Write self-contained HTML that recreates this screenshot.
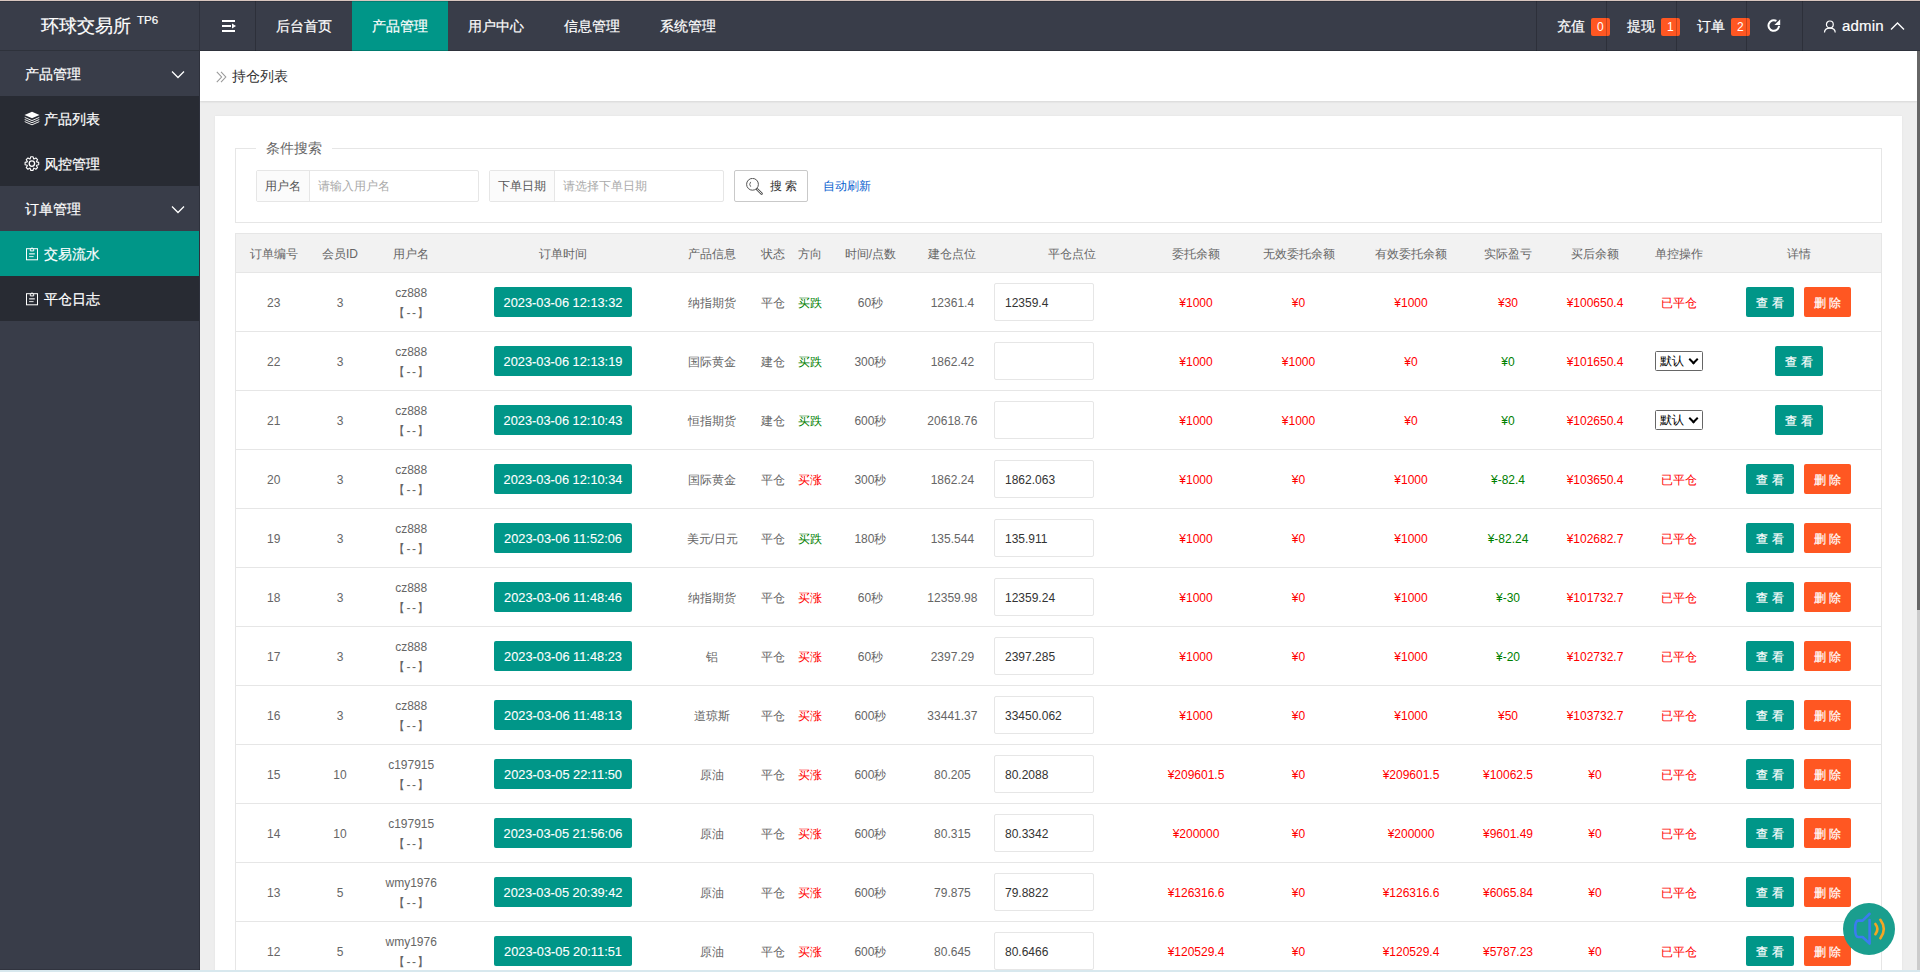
<!DOCTYPE html>
<html><head><meta charset="utf-8"><title>持仓列表</title>
<style>
*{box-sizing:border-box;margin:0;padding:0}
html,body{width:1920px;height:972px;overflow:hidden;background:#eee;font-family:"Liberation Sans",sans-serif;font-size:14px;color:#333}
.abs{position:absolute}
#topline{position:absolute;left:0;top:0;width:1920px;height:1px;background:#d8c6bf}
#hdr{position:absolute;left:0;top:1px;width:1920px;height:50px;background:#393D49;color:#fff}
#hdr .shade{position:absolute;left:0;bottom:0;width:100%;height:1px;background:rgba(0,0,0,.18)}
#hdr .shadet{position:absolute;left:0;top:0;width:100%;height:1px;background:rgba(0,0,0,.15)}
#logo{position:absolute;left:0;top:0;width:199px;height:49px;color:#fff}
#logo .t{position:absolute;left:41px;top:13px;font-size:18px;line-height:24px;white-space:nowrap}
#logo sup{position:absolute;left:96px;top:-1px;font-size:11.6px;line-height:14px}
.vline{position:absolute;top:0;width:1px;height:50px;background:rgba(0,0,0,.2)}
.nav{position:absolute;top:0;height:50px;line-height:50px;font-size:14px;color:#fff;text-align:center;white-space:nowrap}
.nav.act{background:#009688}
.nav,.si .tx,#logo .t{-webkit-text-stroke:0.2px #fff}
.badge{position:absolute;top:17px;height:18px;line-height:18px;padding:0 6px;background:#FF5722;color:#fff;font-size:12px;border-radius:2px}
#side{position:absolute;left:0;top:51px;width:199px;height:921px;background:#393D49}
#sideline{position:absolute;left:199px;top:1px;width:1px;height:969px;background:#2e313c}
.si{position:absolute;left:0;width:199px;height:45px;line-height:45px;color:#fff;font-size:14px;white-space:nowrap}
.si.child{background:#282B33}
.si.on{background:#009688}
.si .tx{position:absolute;left:25px;top:1px}
.si.child .tx{left:44px}
.si svg{position:absolute}
#main{position:absolute;left:200px;top:51px;width:1717px;height:921px;background:#eee;overflow:hidden}
#crumb{position:absolute;left:0;top:0;width:1717px;height:50px;background:#fff;box-shadow:0 1px 2px rgba(0,0,0,.1)}
#crumb .tx{position:absolute;left:32px;top:16px;font-size:14px;line-height:18px;color:#333}
#card{position:absolute;left:15px;top:65px;width:1687px;height:900px;background:#fff;box-shadow:0 0 2px rgba(0,0,0,.06)}
#scroll{position:absolute;left:1917px;top:51px;width:3px;height:559px;background:#666}
#track{position:absolute;left:1917px;top:610px;width:3px;height:360px;background:#cbcbcb}
#botline{position:absolute;left:0;top:970px;width:1920px;height:2px;background:#d8e8ee}
#botshade{position:absolute;left:0;top:969px;width:200px;height:1px;background:rgba(0,0,0,.15)}
fieldset{position:absolute;left:20px;top:32px;width:1647px;height:75px;border:1px solid #e6e6e6}
.legend{position:absolute;left:41px;top:24px;padding:0 10px;background:#fff;font-size:14px;line-height:16px;color:#666}
.ig{position:absolute;top:54px;height:32px;border:1px solid #e6e6e6;border-radius:2px;background:#fff}
.ig .lb{position:absolute;left:0;top:0;height:30px;line-height:30px;background:#FBFBFB;border-right:1px solid #e6e6e6;font-size:12px;color:#555;text-align:center}
.ig .ph{position:absolute;top:0;line-height:30px;font-size:12px;color:#aaa;white-space:nowrap}
.sbtn{position:absolute;left:519px;top:54px;width:74px;height:32px;border:1px solid #C9C9C9;border-radius:2px;background:#fff}
.sbtn .tx{position:absolute;left:35px;top:0;line-height:30px;font-size:12px;color:#333;white-space:nowrap}
.auto{position:absolute;left:608px;top:54px;line-height:32px;font-size:12px;color:#0a62d0;white-space:nowrap}
#tbl{position:absolute;left:20px;top:117px;width:1647px;border:1px solid #e6e6e6;border-bottom:none}
.th{position:relative;height:39px;background:#f2f2f2;border-bottom:1px solid #e6e6e6;color:#666;font-size:12px}
.th .c{top:14px;line-height:12px}
.tr{position:relative;height:59px;border-bottom:1px solid #e6e6e6;color:#666;font-size:12px;background:#fff}
.c{position:absolute;top:21px;line-height:18px;white-space:nowrap;transform:translateX(-50%)}
.c.u{top:10px;line-height:20px;text-align:center}
.dd{letter-spacing:1.5px;padding-left:1.5px}
.r{color:#f00}.g{color:#008000}
.tb{position:absolute;top:14px;width:138px;text-align:center;height:30px;line-height:30px;padding:1px 0 0;background:#009688;color:#fff;font-size:12.8px;border-radius:2px;white-space:nowrap;transform:translateX(-50%)}
.inp{position:absolute;left:758px;top:10px;width:100px;height:38px;border:1px solid #e6e6e6;border-radius:2px;line-height:36px;padding:1px 0 0 10px;font-size:12px;color:#333}
.sel{position:absolute;top:19px;width:48px;height:20px;border:1px solid #666;border-radius:1.5px;line-height:18px;font-size:12px;color:#000;padding-left:4px;transform:translateX(-50%)}
.sel i{position:absolute;left:32px;top:5px;width:11px;height:8px;background:none}
.sel i:before{content:"";position:absolute;left:2px;top:-1px;width:5px;height:5px;border-right:2.2px solid #000;border-bottom:2.2px solid #000;transform:rotate(45deg)}
.btns{position:absolute;top:14px;height:30px;white-space:nowrap}
.btns b{display:inline-block;vertical-align:top;width:48px;height:30px;line-height:30px;padding-top:1px;text-align:center;font-weight:500;color:#fff;font-size:12px;border-radius:2px}
.btns b+b{margin-left:10px}
.btns b{-webkit-text-stroke:0.2px #fff}.tb{-webkit-text-stroke:0.1px #fff}
.bv{background:#009688}.bd{background:#FF5722;width:47px!important}
#voice{position:absolute;left:1843px;top:903px;width:52px;height:52px;border-radius:50%;background:#1a9e8e}
</style></head>
<body>
<div id="topline"></div>
<div id="hdr">
  <div id="logo"><div class="t">环球交易所<sup>TP6</sup></div></div>
  <div class="vline" style="left:199px"></div>
  <svg class="abs" style="left:222px;top:19px" width="15" height="13" viewBox="0 0 15 13"><rect x="0" y="0" width="13" height="2" fill="#fff"/><rect x="0" y="5" width="9" height="2" fill="#fff"/><path d="M10 3.5 L14 6 L10 8.5Z" fill="#fff"/><rect x="0" y="10" width="13" height="2" fill="#fff"/></svg>
  <div class="vline" style="left:255px"></div>
  <div class="nav" style="left:256px;width:96px">后台首页</div>
  <div class="nav act" style="left:352px;width:96px">产品管理</div>
  <div class="nav" style="left:448px;width:96px">用户中心</div>
  <div class="nav" style="left:544px;width:96px">信息管理</div>
  <div class="nav" style="left:640px;width:96px">系统管理</div>

  <div class="vline" style="left:1536px"></div>
  <div class="nav" style="left:1557px">充值</div><span class="badge" style="left:1591px">0</span>
  <div class="vline" style="left:1606px"></div>
  <div class="nav" style="left:1627px">提现</div><span class="badge" style="left:1661px">1</span>
  <div class="vline" style="left:1676px"></div>
  <div class="nav" style="left:1697px">订单</div><span class="badge" style="left:1731px">2</span>
  <div class="vline" style="left:1746px"></div>
  <svg class="abs" style="left:1766px;top:17px" width="16" height="16" viewBox="0 0 16 16"><path d="M13.08 7.96 A5.3 5.3 0 1 1 10.45 2.91" fill="none" stroke="#fff" stroke-width="2"/><path d="M14.2 1.2 L14.2 7 L8.4 7Z" fill="#fff"/></svg>
  <div class="vline" style="left:1802px"></div>
  <svg class="abs" style="left:1823px;top:18px" width="14" height="15" viewBox="0 0 14 15"><circle cx="6.85" cy="5.4" r="3.4" fill="none" stroke="#fff" stroke-width="1.2"/><path d="M1.5 13.6 C1.5 10.6 3.7 9.1 6.85 9.1 C10 9.1 12.2 10.6 12.2 13.6" fill="none" stroke="#fff" stroke-width="1.2"/></svg>
  <div class="nav" style="left:1842px;font-size:15px;letter-spacing:0.2px">admin</div>
  <svg class="abs" style="left:1890px;top:20px" width="15" height="10" viewBox="0 0 15 10"><path d="M1 8.5 L7.5 2 L14 8.5" fill="none" stroke="#fff" stroke-width="1.4"/></svg>
  <div class="shade"></div><div class="shadet"></div>
</div>

<div id="side">
  <div class="si" style="top:0"><span class="tx">产品管理</span>
    <svg style="left:171px;top:19px" width="14" height="9" viewBox="0 0 14 9"><path d="M1 1.5 L7 7.5 L13 1.5" fill="none" stroke="#fff" stroke-width="1.3"/></svg></div>
  <div class="si child" style="top:45px">
    <svg style="left:24px;top:15px" width="16" height="15" viewBox="0 0 16 15"><path d="M8 0.8 L15.5 4 L8 7.2 L0.5 4Z" fill="#fff"/><path d="M0.7 6.4 L8 9.6 L15.3 6.4 M0.7 8.5 L8 11.7 L15.3 8.5 M0.7 10.6 L8 13.8 L15.3 10.6" fill="none" stroke="#fff" stroke-width="0.9"/></svg>
    <span class="tx">产品列表</span></div>
  <div class="si child" style="top:90px">
    <svg style="left:24px;top:15px" width="16" height="16" viewBox="0 0 16 16"><path d="M6.19 2.90 L6.70 0.80 L9.10 0.80 L9.61 2.90 L10.01 3.07 L11.86 1.95 L13.55 3.64 L12.43 5.49 L12.60 5.89 L14.70 6.40 L14.70 8.80 L12.60 9.31 L12.43 9.71 L13.55 11.56 L11.86 13.25 L10.01 12.13 L9.61 12.30 L9.10 14.40 L6.70 14.40 L6.19 12.30 L5.79 12.13 L3.94 13.25 L2.25 11.56 L3.37 9.71 L3.20 9.31 L1.10 8.80 L1.10 6.40 L3.20 5.89 L3.37 5.49 L2.25 3.64 L3.94 1.95 L5.79 3.07Z" fill="none" stroke="#fff" stroke-width="1.1" stroke-linejoin="round"/><circle cx="7.9" cy="7.6" r="2.7" fill="none" stroke="#fff" stroke-width="1.3"/></svg>
    <span class="tx">风控管理</span></div>
  <div class="si" style="top:135px"><span class="tx">订单管理</span>
    <svg style="left:171px;top:19px" width="14" height="9" viewBox="0 0 14 9"><path d="M1 1.5 L7 7.5 L13 1.5" fill="none" stroke="#fff" stroke-width="1.3"/></svg></div>
  <div class="si child on" style="top:180px">
    <svg style="left:26px;top:16px" width="12" height="14" viewBox="0 0 12 14"><rect x="0.5" y="1.7" width="11" height="11.1" fill="none" stroke="#fff" stroke-width="1"/><path d="M4.3 3.9 V2.2 Q6 -0.6 7.7 2.2 V3.9 Z" fill="none" stroke="#fff" stroke-width="1"/><rect x="3.1" y="6.2" width="5.7" height="1.3" fill="#fff" opacity=".85"/><rect x="3.1" y="9.1" width="4.5" height="1" fill="#fff" opacity=".85"/></svg>
    <span class="tx">交易流水</span></div>
  <div class="si child" style="top:225px">
    <svg style="left:26px;top:16px" width="12" height="14" viewBox="0 0 12 14"><rect x="0.5" y="1.7" width="11" height="11.1" fill="none" stroke="#fff" stroke-width="1"/><path d="M4.3 3.9 V2.2 Q6 -0.6 7.7 2.2 V3.9 Z" fill="none" stroke="#fff" stroke-width="1"/><rect x="3.1" y="6.2" width="5.7" height="1.3" fill="#fff" opacity=".85"/><rect x="3.1" y="9.1" width="4.5" height="1" fill="#fff" opacity=".85"/></svg>
    <span class="tx">平仓日志</span></div>
</div>
<div id="sideline"></div>

<div id="main">
  <div id="crumb">
    <svg class="abs" style="left:16px;top:20px" width="11" height="12" viewBox="0 0 11 12"><path d="M0.8 0.8 L5.6 6 L0.8 11.2 M5 0.8 L9.8 6 L5 11.2" fill="none" stroke="#999" stroke-width="1.1"/></svg>
    <span class="tx">持仓列表</span>
  </div>
  <div id="card">
    <fieldset></fieldset>
    <span class="legend">条件搜索</span>
    <div class="ig" style="left:41px;width:223px"><span class="lb" style="width:53px">用户名</span><span class="ph" style="left:61px">请输入用户名</span></div>
    <div class="ig" style="left:274px;width:235px"><span class="lb" style="width:65px">下单日期</span><span class="ph" style="left:73px">请选择下单日期</span></div>
    <div class="sbtn">
      <svg class="abs" style="left:10px;top:7px" width="19" height="18" viewBox="0 0 19 18"><circle cx="7.5" cy="6.3" r="5.9" fill="none" stroke="#555" stroke-width="1"/><path d="M12.2 11.4 L16.6 15.6" stroke="#555" stroke-width="2.6" stroke-linecap="round"/><path d="M12.4 11.6 L16.4 15.4" stroke="#fff" stroke-width="0.9" stroke-linecap="round"/><path d="M5.7 3.9 Q3.6 6.3 5.7 8.7" fill="none" stroke="#555" stroke-width="0.9"/></svg>
      <span class="tx">搜 索</span></div>
    <span class="auto">自动刷新</span>
    <div id="tbl">
      <div class="th"><span class="c" style="left:37.7px">订单编号</span><span class="c" style="left:104.0px">会员ID</span><span class="c" style="left:175.2px">用户名</span><span class="c" style="left:327.0px">订单时间</span><span class="c" style="left:476.2px">产品信息</span><span class="c" style="left:536.5px">状态</span><span class="c" style="left:574.0px">方向</span><span class="c" style="left:634.4px">时间/点数</span><span class="c" style="left:716.4px">建仓点位</span><span class="c" style="left:835.9px">平仓点位</span><span class="c" style="left:960.0px">委托余额</span><span class="c" style="left:1062.5px">无效委托余额</span><span class="c" style="left:1175.0px">有效委托余额</span><span class="c" style="left:1272.0px">实际盈亏</span><span class="c" style="left:1359.0px">买后余额</span><span class="c" style="left:1443.0px">单控操作</span><span class="c" style="left:1563.0px">详情</span></div>
<div class="tr"><span class="c" style="left:37.7px">23</span><span class="c" style="left:104.0px">3</span><span class="c u" style="left:175.2px">cz888<br>【<span class="dd">--</span>】</span><span class="tb" style="left:327.0px">2023-03-06 12:13:32</span><span class="c" style="left:476.2px">纳指期货</span><span class="c" style="left:536.5px">平仓</span><span class="c g" style="left:574.0px">买跌</span><span class="c" style="left:634.4px">60秒</span><span class="c" style="left:716.4px">12361.4</span><span class="inp">12359.4</span><span class="c r" style="left:960.0px">¥1000</span><span class="c r" style="left:1062.5px">¥0</span><span class="c r" style="left:1175.0px">¥1000</span><span class="c r" style="left:1272.0px">¥30</span><span class="c r" style="left:1359.0px">¥100650.4</span><span class="c r" style="left:1443.0px">已平仓</span><span class="btns" style="left:1510px"><b class="bv">查 看</b><b class="bd">删 除</b></span></div>
<div class="tr"><span class="c" style="left:37.7px">22</span><span class="c" style="left:104.0px">3</span><span class="c u" style="left:175.2px">cz888<br>【<span class="dd">--</span>】</span><span class="tb" style="left:327.0px">2023-03-06 12:13:19</span><span class="c" style="left:476.2px">国际黄金</span><span class="c" style="left:536.5px">建仓</span><span class="c g" style="left:574.0px">买跌</span><span class="c" style="left:634.4px">300秒</span><span class="c" style="left:716.4px">1862.42</span><span class="inp"></span><span class="c r" style="left:960.0px">¥1000</span><span class="c r" style="left:1062.5px">¥1000</span><span class="c r" style="left:1175.0px">¥0</span><span class="c g" style="left:1272.0px">¥0</span><span class="c r" style="left:1359.0px">¥101650.4</span><span class="sel" style="left:1443.0px">默认<i></i></span><span class="btns" style="left:1539px"><b class="bv">查 看</b></span></div>
<div class="tr"><span class="c" style="left:37.7px">21</span><span class="c" style="left:104.0px">3</span><span class="c u" style="left:175.2px">cz888<br>【<span class="dd">--</span>】</span><span class="tb" style="left:327.0px">2023-03-06 12:10:43</span><span class="c" style="left:476.2px">恒指期货</span><span class="c" style="left:536.5px">建仓</span><span class="c g" style="left:574.0px">买跌</span><span class="c" style="left:634.4px">600秒</span><span class="c" style="left:716.4px">20618.76</span><span class="inp"></span><span class="c r" style="left:960.0px">¥1000</span><span class="c r" style="left:1062.5px">¥1000</span><span class="c r" style="left:1175.0px">¥0</span><span class="c g" style="left:1272.0px">¥0</span><span class="c r" style="left:1359.0px">¥102650.4</span><span class="sel" style="left:1443.0px">默认<i></i></span><span class="btns" style="left:1539px"><b class="bv">查 看</b></span></div>
<div class="tr"><span class="c" style="left:37.7px">20</span><span class="c" style="left:104.0px">3</span><span class="c u" style="left:175.2px">cz888<br>【<span class="dd">--</span>】</span><span class="tb" style="left:327.0px">2023-03-06 12:10:34</span><span class="c" style="left:476.2px">国际黄金</span><span class="c" style="left:536.5px">平仓</span><span class="c r" style="left:574.0px">买涨</span><span class="c" style="left:634.4px">300秒</span><span class="c" style="left:716.4px">1862.24</span><span class="inp">1862.063</span><span class="c r" style="left:960.0px">¥1000</span><span class="c r" style="left:1062.5px">¥0</span><span class="c r" style="left:1175.0px">¥1000</span><span class="c g" style="left:1272.0px">¥-82.4</span><span class="c r" style="left:1359.0px">¥103650.4</span><span class="c r" style="left:1443.0px">已平仓</span><span class="btns" style="left:1510px"><b class="bv">查 看</b><b class="bd">删 除</b></span></div>
<div class="tr"><span class="c" style="left:37.7px">19</span><span class="c" style="left:104.0px">3</span><span class="c u" style="left:175.2px">cz888<br>【<span class="dd">--</span>】</span><span class="tb" style="left:327.0px">2023-03-06 11:52:06</span><span class="c" style="left:476.2px">美元/日元</span><span class="c" style="left:536.5px">平仓</span><span class="c g" style="left:574.0px">买跌</span><span class="c" style="left:634.4px">180秒</span><span class="c" style="left:716.4px">135.544</span><span class="inp">135.911</span><span class="c r" style="left:960.0px">¥1000</span><span class="c r" style="left:1062.5px">¥0</span><span class="c r" style="left:1175.0px">¥1000</span><span class="c g" style="left:1272.0px">¥-82.24</span><span class="c r" style="left:1359.0px">¥102682.7</span><span class="c r" style="left:1443.0px">已平仓</span><span class="btns" style="left:1510px"><b class="bv">查 看</b><b class="bd">删 除</b></span></div>
<div class="tr"><span class="c" style="left:37.7px">18</span><span class="c" style="left:104.0px">3</span><span class="c u" style="left:175.2px">cz888<br>【<span class="dd">--</span>】</span><span class="tb" style="left:327.0px">2023-03-06 11:48:46</span><span class="c" style="left:476.2px">纳指期货</span><span class="c" style="left:536.5px">平仓</span><span class="c r" style="left:574.0px">买涨</span><span class="c" style="left:634.4px">60秒</span><span class="c" style="left:716.4px">12359.98</span><span class="inp">12359.24</span><span class="c r" style="left:960.0px">¥1000</span><span class="c r" style="left:1062.5px">¥0</span><span class="c r" style="left:1175.0px">¥1000</span><span class="c g" style="left:1272.0px">¥-30</span><span class="c r" style="left:1359.0px">¥101732.7</span><span class="c r" style="left:1443.0px">已平仓</span><span class="btns" style="left:1510px"><b class="bv">查 看</b><b class="bd">删 除</b></span></div>
<div class="tr"><span class="c" style="left:37.7px">17</span><span class="c" style="left:104.0px">3</span><span class="c u" style="left:175.2px">cz888<br>【<span class="dd">--</span>】</span><span class="tb" style="left:327.0px">2023-03-06 11:48:23</span><span class="c" style="left:476.2px">铝</span><span class="c" style="left:536.5px">平仓</span><span class="c r" style="left:574.0px">买涨</span><span class="c" style="left:634.4px">60秒</span><span class="c" style="left:716.4px">2397.29</span><span class="inp">2397.285</span><span class="c r" style="left:960.0px">¥1000</span><span class="c r" style="left:1062.5px">¥0</span><span class="c r" style="left:1175.0px">¥1000</span><span class="c g" style="left:1272.0px">¥-20</span><span class="c r" style="left:1359.0px">¥102732.7</span><span class="c r" style="left:1443.0px">已平仓</span><span class="btns" style="left:1510px"><b class="bv">查 看</b><b class="bd">删 除</b></span></div>
<div class="tr"><span class="c" style="left:37.7px">16</span><span class="c" style="left:104.0px">3</span><span class="c u" style="left:175.2px">cz888<br>【<span class="dd">--</span>】</span><span class="tb" style="left:327.0px">2023-03-06 11:48:13</span><span class="c" style="left:476.2px">道琼斯</span><span class="c" style="left:536.5px">平仓</span><span class="c r" style="left:574.0px">买涨</span><span class="c" style="left:634.4px">600秒</span><span class="c" style="left:716.4px">33441.37</span><span class="inp">33450.062</span><span class="c r" style="left:960.0px">¥1000</span><span class="c r" style="left:1062.5px">¥0</span><span class="c r" style="left:1175.0px">¥1000</span><span class="c r" style="left:1272.0px">¥50</span><span class="c r" style="left:1359.0px">¥103732.7</span><span class="c r" style="left:1443.0px">已平仓</span><span class="btns" style="left:1510px"><b class="bv">查 看</b><b class="bd">删 除</b></span></div>
<div class="tr"><span class="c" style="left:37.7px">15</span><span class="c" style="left:104.0px">10</span><span class="c u" style="left:175.2px">c197915<br>【<span class="dd">--</span>】</span><span class="tb" style="left:327.0px">2023-03-05 22:11:50</span><span class="c" style="left:476.2px">原油</span><span class="c" style="left:536.5px">平仓</span><span class="c r" style="left:574.0px">买涨</span><span class="c" style="left:634.4px">600秒</span><span class="c" style="left:716.4px">80.205</span><span class="inp">80.2088</span><span class="c r" style="left:960.0px">¥209601.5</span><span class="c r" style="left:1062.5px">¥0</span><span class="c r" style="left:1175.0px">¥209601.5</span><span class="c r" style="left:1272.0px">¥10062.5</span><span class="c r" style="left:1359.0px">¥0</span><span class="c r" style="left:1443.0px">已平仓</span><span class="btns" style="left:1510px"><b class="bv">查 看</b><b class="bd">删 除</b></span></div>
<div class="tr"><span class="c" style="left:37.7px">14</span><span class="c" style="left:104.0px">10</span><span class="c u" style="left:175.2px">c197915<br>【<span class="dd">--</span>】</span><span class="tb" style="left:327.0px">2023-03-05 21:56:06</span><span class="c" style="left:476.2px">原油</span><span class="c" style="left:536.5px">平仓</span><span class="c r" style="left:574.0px">买涨</span><span class="c" style="left:634.4px">600秒</span><span class="c" style="left:716.4px">80.315</span><span class="inp">80.3342</span><span class="c r" style="left:960.0px">¥200000</span><span class="c r" style="left:1062.5px">¥0</span><span class="c r" style="left:1175.0px">¥200000</span><span class="c r" style="left:1272.0px">¥9601.49</span><span class="c r" style="left:1359.0px">¥0</span><span class="c r" style="left:1443.0px">已平仓</span><span class="btns" style="left:1510px"><b class="bv">查 看</b><b class="bd">删 除</b></span></div>
<div class="tr"><span class="c" style="left:37.7px">13</span><span class="c" style="left:104.0px">5</span><span class="c u" style="left:175.2px">wmy1976<br>【<span class="dd">--</span>】</span><span class="tb" style="left:327.0px">2023-03-05 20:39:42</span><span class="c" style="left:476.2px">原油</span><span class="c" style="left:536.5px">平仓</span><span class="c r" style="left:574.0px">买涨</span><span class="c" style="left:634.4px">600秒</span><span class="c" style="left:716.4px">79.875</span><span class="inp">79.8822</span><span class="c r" style="left:960.0px">¥126316.6</span><span class="c r" style="left:1062.5px">¥0</span><span class="c r" style="left:1175.0px">¥126316.6</span><span class="c r" style="left:1272.0px">¥6065.84</span><span class="c r" style="left:1359.0px">¥0</span><span class="c r" style="left:1443.0px">已平仓</span><span class="btns" style="left:1510px"><b class="bv">查 看</b><b class="bd">删 除</b></span></div>
<div class="tr"><span class="c" style="left:37.7px">12</span><span class="c" style="left:104.0px">5</span><span class="c u" style="left:175.2px">wmy1976<br>【<span class="dd">--</span>】</span><span class="tb" style="left:327.0px">2023-03-05 20:11:51</span><span class="c" style="left:476.2px">原油</span><span class="c" style="left:536.5px">平仓</span><span class="c r" style="left:574.0px">买涨</span><span class="c" style="left:634.4px">600秒</span><span class="c" style="left:716.4px">80.645</span><span class="inp">80.6466</span><span class="c r" style="left:960.0px">¥120529.4</span><span class="c r" style="left:1062.5px">¥0</span><span class="c r" style="left:1175.0px">¥120529.4</span><span class="c r" style="left:1272.0px">¥5787.23</span><span class="c r" style="left:1359.0px">¥0</span><span class="c r" style="left:1443.0px">已平仓</span><span class="btns" style="left:1510px"><b class="bv">查 看</b><b class="bd">删 除</b></span></div>
    </div>
  </div>
</div>
<div id="scroll"></div><div id="track"></div><div id="botshade"></div>
<div id="botline"></div>
<div id="voice"><svg width="52" height="52" viewBox="0 0 52 52"><path d="M26.6 10.8 L19.6 17.6 H15.2 C11.2 17.6 11.2 34 15.2 34 H19.6 L26.6 40.6 V17" fill="none" stroke="#3b7bf0" stroke-width="2.6" stroke-linejoin="round" stroke-linecap="round"/><path d="M32.4 21 Q36.4 26 32.4 31.2" fill="none" stroke="#f5a623" stroke-width="2.6" stroke-linecap="round"/><path d="M37.4 16.8 Q44.2 26 37.4 35.3" fill="none" stroke="#f5a623" stroke-width="2.6" stroke-linecap="round"/></svg></div>
</body></html>
